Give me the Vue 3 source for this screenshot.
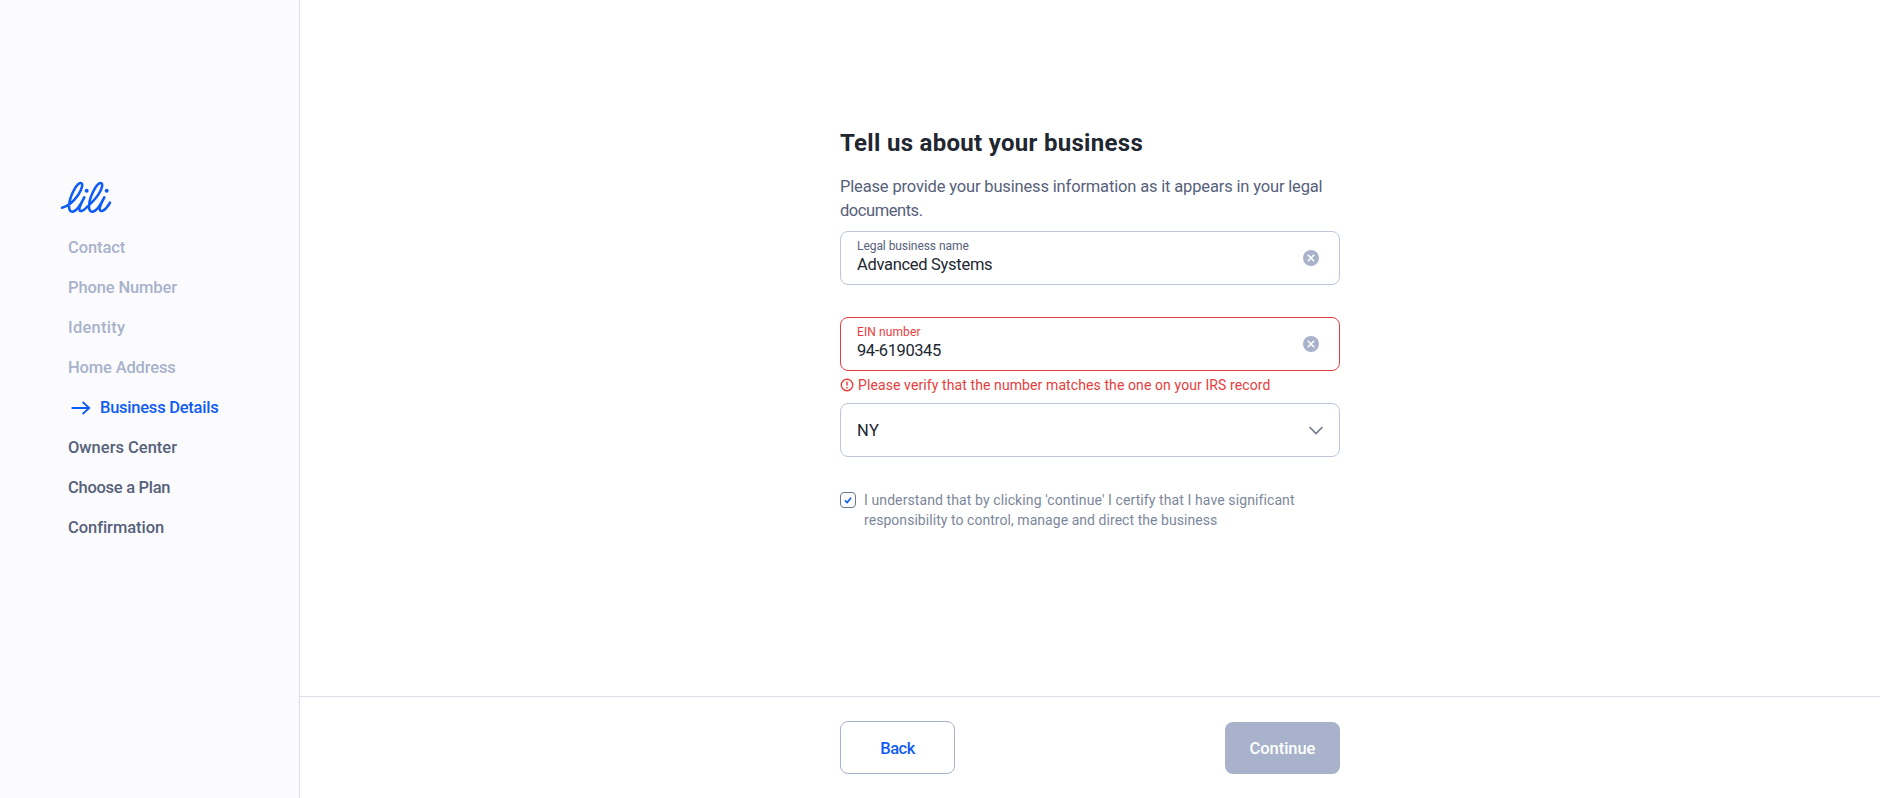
<script setup>
const steps = [
  { label: 'Contact', state: 'done', key: 'contact' },
  { label: 'Phone Number', state: 'done', key: 'phone' },
  { label: 'Identity', state: 'done', key: 'identity' },
  { label: 'Home Address', state: 'done', key: 'home' },
  { label: 'Business Details', state: 'active', key: 'business' },
  { label: 'Owners Center', state: 'todo', key: 'owners' },
  { label: 'Choose a Plan', state: 'todo', key: 'plan' },
  { label: 'Confirmation', state: 'todo', key: 'confirmation' },
]
const fields = [
  { id: 'name', label: 'Legal business name', value: 'Advanced Systems', error: '' },
  {
    id: 'ein',
    label: 'EIN number',
    value: '94-6190345',
    error: 'Please verify that the number matches the one on your IRS record',
  },
]
</script>

<template>
  <div class="page">
    <aside class="sidebar">
      <svg class="logo" viewBox="30 28 160 104" fill="none" stroke="#0f5bf5" stroke-linecap="round" stroke-linejoin="round">
        <path stroke-width="7.6" d="M36 111C54 107 71 92 85 72C96 56 101 37 92 37C79 37 58 80 57 106C57 119 61 124 68 123C79 121 91 105 103 80C96 93 88 108 88 115C88 125 99 122 108 112C124 98 135 87 145 72C156 56 161 37 152 37C139 37 118 80 117 106C117 119 121 124 128 123C139 121 151 105 163 80C156 93 148 108 149 116C151 127 167 120 180 96" />
        <circle cx="110" cy="60" r="6" fill="#0f5bf5" stroke="none" />
        <circle cx="170" cy="60" r="6" fill="#0f5bf5" stroke="none" />
      </svg>
      <nav class="steps">
        <div v-for="s in steps" :key="s.key" class="step" :class="[s.state, s.key]">
          <svg v-if="s.state === 'active'" class="arrow" viewBox="0 0 20 14" fill="none" stroke="currentColor" stroke-width="1.8">
            <path d="M0.6 7H18.2M11.6 1L18.2 7L11.6 13" />
          </svg>
          <span>{{ s.label }}</span>
        </div>
      </nav>
    </aside>

    <section class="content">
      <main class="form">
        <h1>Tell us about your business</h1>
        <p class="intro">Please provide your business information as it appears in your legal<br><span class="tail">documents.</span></p>

        <div v-for="f in fields" :key="f.id" class="group" :class="f.id">
          <div class="field" :class="{ invalid: f.error }">
            <div class="texts">
              <span class="label">{{ f.label }}</span>
              <span class="value">{{ f.value }}</span>
            </div>
            <svg class="clear" viewBox="0 0 16 16">
              <circle cx="8" cy="8" r="8" fill="#a8b2ca" />
              <path d="M4.8 4.8L11.2 11.2M11.2 4.8L4.8 11.2" stroke="#fff" stroke-width="1.6" />
            </svg>
          </div>
          <div v-if="f.error" class="error">
            <svg viewBox="0 0 14 14" fill="none" stroke="currentColor" stroke-width="1.4">
              <circle cx="7" cy="7" r="5.7" />
              <path d="M7 3.6V7.8M7 8.9V10.4" />
            </svg>
            <span>{{ f.error }}</span>
          </div>
        </div>

        <div class="field select">
          <span class="value ny">NY</span>
          <svg class="chevron" viewBox="0 0 14 9" fill="none" stroke="#6d788a" stroke-width="1.5">
            <path d="M0.6 1L7 7.6L13.4 1" />
          </svg>
        </div>

        <div class="consent">
          <span class="box">
            <svg viewBox="0 0 8 7" fill="none" stroke="#0f5bf5" stroke-width="1.7">
              <path d="M0.9 3.3L3.2 5.5L7 0.8" />
            </svg>
          </span>
          <p><span class="c1">I understand that by clicking 'continue' I certify that I have significant</span><br><span class="c2">responsibility to control, manage and direct the business</span></p>
        </div>
      </main>

      <footer class="footer">
        <div class="actions">
          <button class="back"><span>Back</span></button>
          <button class="next"><span>Continue</span></button>
        </div>
      </footer>
    </section>
  </div>
</template>

<style>
body { margin: 0; overflow: hidden; }
</style>

<style scoped>
.page {
  display: flex;
  height: 798px;
  background: #fff;
  font-family: Roboto, "Liberation Sans", sans-serif;
  font-size: 16.5px;
  line-height: 24px;
  color: #212631;
  white-space: nowrap;
}
.sidebar {
  box-sizing: border-box;
  width: 300px;
  flex: none;
  padding: 179.6px 0 0 60px;
  background: #fbfbfe;
  border-right: 1px solid #dddfe8;
}
.logo { display: block; width: 53.33px; height: 34.67px; }
.steps {
  display: flex;
  flex-direction: column;
  gap: 16px;
  padding: 20.73px 0 0 8px;
}
.step { display: flex; align-items: center; height: 24px; font-weight: 500; color: #56617a; }
.step span { padding-top: 2px; }
.step.done { color: #a8b2ca; }
.step.active { color: #0f5bf5; }
.contact { letter-spacing: -0.1px; }
.phone { letter-spacing: -0.12px; }
.identity { letter-spacing: 0.25px; }
.home { letter-spacing: -0.15px; }
.business { letter-spacing: -0.24px; }
.plan { letter-spacing: -0.28px; }
.confirmation { letter-spacing: -0.05px; }
.arrow { width: 20px; height: 14px; margin: 2px 9px 0 3px; }
.content { flex: 1; display: flex; flex-direction: column; min-width: 0; }
.form { box-sizing: border-box; width: 500px; height: 696px; margin: 0 auto; padding-top: 126px; }
h1 { margin: 0; font-size: 24px; line-height: 34px; font-weight: 700; letter-spacing: 0.3px; }
.intro { margin: 15px 0 8px; color: #56617a; letter-spacing: -0.16px; }
.tail { letter-spacing: -0.45px; }
.field {
  box-sizing: border-box;
  height: 54px;
  display: flex;
  align-items: center;
  justify-content: space-between;
  padding: 0 20px 0 16px;
  border: 1px solid #bec6da;
  border-radius: 8px;
}
.group.name { margin-bottom: 32px; }
.group.ein { margin-bottom: 8px; }
.field.invalid { border-color: #e93c3c; }
.texts { display: flex; flex-direction: column; gap: 1px; padding-bottom: 3px; }
.label { font-size: 12px; line-height: 16px; color: #56617a; }
.name .label { letter-spacing: -0.06px; }
.name .value { letter-spacing: -0.3px; }
.ein .label { letter-spacing: 0.1px; }
.ein .value { letter-spacing: -0.42px; }
.invalid .label, .error { color: #e93c3c; }
.value { line-height: 20px; }
.value.ny { padding-top: 1px; letter-spacing: 0.5px; }
.clear { width: 16px; height: 16px; }
.error { display: flex; align-items: center; gap: 4px; height: 20px; margin-top: 4px; font-size: 14px; line-height: 20px; letter-spacing: 0.1px; }
.error svg { width: 14px; height: 14px; }
.select { padding-right: 16px; }
.chevron { width: 14px; height: 9px; margin-top: 1px; }
.consent { display: flex; gap: 8px; margin-top: 33px; }
.box {
  box-sizing: border-box;
  display: flex;
  align-items: center;
  justify-content: center;
  width: 16px;
  height: 16px;
  margin-top: 2px;
  border: 1px solid #6d788a;
  border-radius: 4px;
}
.box svg { width: 8px; height: 7px; }
.consent p { margin: 0; font-size: 14px; line-height: 20px; color: #7c879b; }
.c1 { letter-spacing: 0.1px; }
.c2 { letter-spacing: 0.05px; }
.footer { flex: 1; border-top: 1px solid #dddfe8; }
.actions { display: flex; align-items: flex-end; justify-content: space-between; width: 500px; margin: 24px auto 0; }
button {
  box-sizing: border-box;
  width: 115px;
  height: 52px;
  padding: 2px 0 0;
  border: 0;
  border-radius: 8px;
  font: 500 16.5px/24px Roboto, "Liberation Sans", sans-serif;
}
.back { height: 53px; border: 1px solid #a8b2ca; background: #fff; color: #0f5bf5; letter-spacing: -0.5px; }
.next { background: #a8b2ca; color: #fff; letter-spacing: -0.05px; }
</style>
